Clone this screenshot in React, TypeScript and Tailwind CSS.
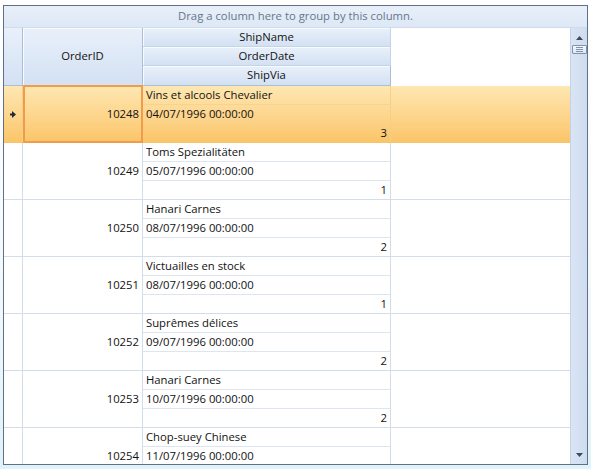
import React from 'react';

type Order = {
  id: number;
  shipName: string;
  orderDate: string;
  shipVia: number;
};

const ORDERS: Order[] = [
  { id: 10248, shipName: 'Vins et alcools Chevalier', orderDate: '04/07/1996 00:00:00', shipVia: 3 },
  { id: 10249, shipName: 'Toms Spezialitäten', orderDate: '05/07/1996 00:00:00', shipVia: 1 },
  { id: 10250, shipName: 'Hanari Carnes', orderDate: '08/07/1996 00:00:00', shipVia: 2 },
  { id: 10251, shipName: 'Victuailles en stock', orderDate: '08/07/1996 00:00:00', shipVia: 1 },
  { id: 10252, shipName: 'Suprêmes délices', orderDate: '09/07/1996 00:00:00', shipVia: 2 },
  { id: 10253, shipName: 'Hanari Carnes', orderDate: '10/07/1996 00:00:00', shipVia: 2 },
  { id: 10254, shipName: 'Chop-suey Chinese', orderDate: '11/07/1996 00:00:00', shipVia: 2 },
];

const FONT = { fontFamily: '"Open Sans", "Noto Sans", sans-serif' };

function HeaderCell({ children, last }: { children: React.ReactNode; last?: boolean }) {
  return (
    <div
      className={`flex items-center justify-center bg-gradient-to-b from-[#e9f0fa] to-[#d3e1f3] border-r border-[#a9bfd8] shadow-[inset_1px_1px_0_#f7faff] text-[#111] ${
        last ? 'h-[20px] border-b border-[#a9bfd8]' : 'h-[19px] border-b border-[#c5d5e8]'
      }`}
    >
      {children}
    </div>
  );
}

function OrderRow({ order, selected }: { order: Order; selected: boolean }) {
  const lineColor = selected ? 'border-[#f5d490]' : 'border-[#dce5f0]';
  return (
    <div
      className={`flex h-[57px] shrink-0 border-b ${
        selected
          ? 'bg-gradient-to-b from-[#fee7b2] to-[#fbc568] border-[#f3c56f]'
          : 'bg-white border-[#d3dde9]'
      }`}
    >
      <div className={`w-[19px] shrink-0 flex items-center justify-center border-r ${selected ? 'border-[#f4cf85]' : 'border-[#d3dde9]'}`}>
        {selected && (
          <svg width="6" height="7" viewBox="0 0 6 7">
            <path d="M0 2.5h2V0l4 3.5L2 7V4.5H0z" fill="#1d2a3c" />
          </svg>
        )}
      </div>
      <div
        className={`w-[120px] shrink-0 flex items-center justify-end ${
          selected ? 'border-2 border-[#ef9c4c] -mt-px -mb-px h-[58px] pr-[2px]' : 'border-r border-[#d3dde9] pr-[3px]'
        }`}
      >
        {order.id}
      </div>
      <div className={`w-[248px] shrink-0 flex flex-col border-r ${selected ? 'border-[#f4cf85]' : 'border-[#d3dde9]'}`}>
        <div className={`h-[19px] flex items-center px-[3px] border-b ${lineColor}`}>{order.shipName}</div>
        <div className={`h-[19px] flex items-center px-[3px] border-b ${lineColor}`}>{order.orderDate}</div>
        <div className="h-[18px] flex items-center justify-end pr-[3px]">{order.shipVia}</div>
      </div>
    </div>
  );
}

export default function App() {
  return (
    <div
      className="w-[591px] h-[469px] bg-gradient-to-b from-[#ffffff] via-[#f7fafc] to-[#dff3f8] pt-[5px] pl-[3px] overflow-hidden text-[11.3px] text-[#111]"
      style={FONT}
    >
      <div className="w-[585px] h-[460px] border border-[#5f7088] bg-white flex flex-col overflow-hidden">
        <div className="h-[22px] shrink-0 flex items-center justify-center bg-gradient-to-b from-[#e8eff9] to-[#dde8f6] border-b border-[#cfdcec] text-[#66768a]">
          Drag a column here to group by this column.
        </div>
        <div className="flex flex-1 min-h-0">
          <div className="flex-1 min-w-0 flex flex-col overflow-hidden">
            <div className="flex shrink-0">
              <div className="w-[19px] h-[58px] bg-gradient-to-b from-[#e9f0fa] to-[#d3e1f3] border-r border-b border-[#a9bfd8]" />
              <div className="w-[120px] h-[58px] flex items-center justify-center bg-gradient-to-b from-[#e9f0fa] to-[#d3e1f3] border-r border-b border-[#a9bfd8] shadow-[inset_1px_1px_0_#f7faff]">
                OrderID
              </div>
              <div className="w-[248px] flex flex-col">
                <HeaderCell>ShipName</HeaderCell>
                <HeaderCell>OrderDate</HeaderCell>
                <HeaderCell last>ShipVia</HeaderCell>
              </div>
            </div>
            {ORDERS.map((o, i) => (
              <OrderRow key={o.id} order={o} selected={i === 0} />
            ))}
          </div>
          <div className="w-[17px] shrink-0 bg-gradient-to-r from-[#d9e5f4] to-[#cfdcee] border-l border-[#c2d3e8] flex flex-col items-center">
            <div className="h-[15px] flex items-center justify-center mt-[2px]">
              <svg width="7" height="4" viewBox="0 0 7 4">
                <path d="M3.5 0L7 4H0z" fill="#3b4a5e" />
              </svg>
            </div>
            <div className="w-[15px] h-[9px] border border-[#7f93ae] rounded-[1px] bg-gradient-to-b from-[#f5f8fd] to-[#dbe6f4] flex flex-col justify-center items-center gap-[1px]">
              <div className="w-[7px] h-px bg-[#7f93ae]" />
              <div className="w-[7px] h-px bg-[#7f93ae]" />
              <div className="w-[7px] h-px bg-[#7f93ae]" />
            </div>
            <div className="flex-1" />
            <div className="h-[15px] flex items-center justify-center mb-[2px]">
              <svg width="7" height="4" viewBox="0 0 7 4">
                <path d="M0 0h7L3.5 4z" fill="#3b4a5e" />
              </svg>
            </div>
          </div>
        </div>
      </div>
    </div>
  );
}
